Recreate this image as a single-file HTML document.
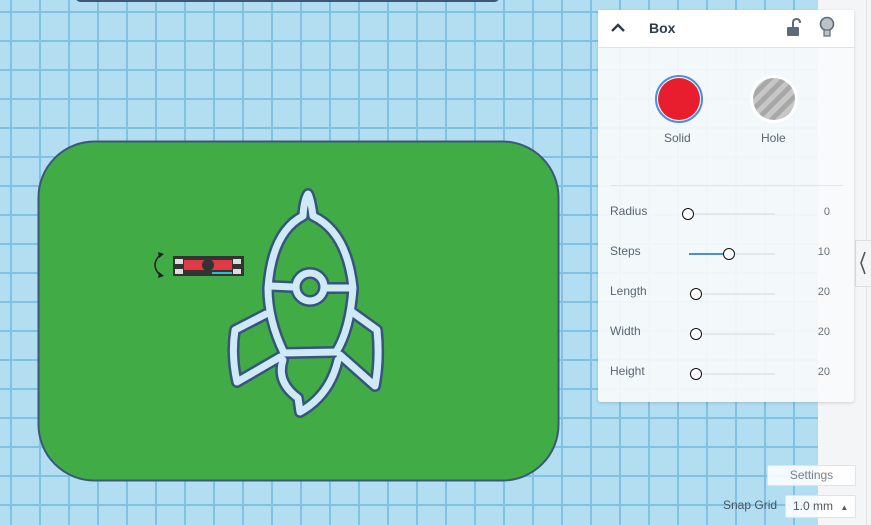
<!DOCTYPE html>
<html><head><meta charset="utf-8"><style>
*{margin:0;padding:0;box-sizing:border-box}
body{width:871px;height:525px;overflow:hidden;position:relative;font-family:"Liberation Sans",sans-serif;background:#f4f5f6}
#grid{position:absolute;left:0;top:0;width:818px;height:525px;background-color:#b3def2;
background-image:
linear-gradient(90deg,transparent 10px,#80c2e2 10px,#80c2e2 12px,transparent 12px),
linear-gradient(0deg,transparent 16px,#80c2e2 16px,#80c2e2 18px,transparent 18px);
background-size:29px 29px,29px 29px}
.strip{position:absolute;left:866px;top:0;width:1px;height:525px;background:#e2e4e6}
.panel{position:absolute;left:598px;top:10px;width:256px;height:392px;background:rgba(248,250,251,.92);box-shadow:0 1px 3px rgba(0,0,0,.15);border-radius:3px}
.hdr{height:38px;background:#fff;border-bottom:1px solid #dfe3e6;position:relative}
.lbl{position:absolute;font-size:12px;color:#5a6570}
.val{position:absolute;font-size:11px;color:#6a737b;right:24px}
.track{position:absolute;left:91px;width:86px;height:2px;background:#e6e7ea}
.knob{position:absolute;width:12px;height:12px;border:1.5px solid #111;border-radius:50%;background:#fff}
.btn{position:absolute;border:1px solid #e0e2e4;background:rgba(255,255,255,.85);font-size:12px;color:#7a8288;border-radius:2px}
</style></head><body>
<div id="grid"></div>
<div class="strip"></div>
<div style="position:absolute;left:855px;top:240px;width:16px;height:47px;background:#f4f5f6;border:1px solid #dcdfe2;border-right:none"></div>
<svg style="position:absolute;left:858px;top:250px" width="10" height="26"><path d="M7 2 L3 13 L7 24" stroke="#555" stroke-width="1.6" fill="none"/></svg>
<svg style="position:absolute;left:0;top:0" width="818" height="525">
<rect x="75" y="-10" width="425" height="12" rx="6" fill="#3c5878"/>
<rect x="38.5" y="141.5" width="520" height="339" rx="56" fill="#41ac45" stroke="#3c5878" stroke-width="2"/>
<g fill="none" stroke-linejoin="round" stroke-linecap="round">
<g stroke="#35557a" stroke-width="12">
<path d="M308 194 Q311 200 313 216 Q347 232 353 288 Q350 330 336 352 L284 353 Q268 320 268 288 Q272 232 303 216 Q304 200 308 194Z"/>
<path d="M270 286 L293 287 M327 288 L352 288"/>
<circle cx="310" cy="287" r="14"/>
<path d="M266 314 L235 330 Q231 355 237 382 L280 357"/>
<path d="M352 312 L377 330 Q380 360 375 386 L340 355"/>
<path d="M283 360 Q276 382 298 398 L300 412 Q330 395 338 360"/>
</g>
<g stroke="#cfe9f7" stroke-width="7">
<path d="M308 194 Q311 200 313 216 Q347 232 353 288 Q350 330 336 352 L284 353 Q268 320 268 288 Q272 232 303 216 Q304 200 308 194Z"/>
<path d="M270 286 L293 287 M327 288 L352 288"/>
<circle cx="310" cy="287" r="14"/>
<path d="M266 314 L235 330 Q231 355 237 382 L280 357"/>
<path d="M352 312 L377 330 Q380 360 375 386 L340 355"/>
<path d="M283 360 Q276 382 298 398 L300 412 Q330 395 338 360"/>
</g>
</g>
<path d="M160 255 Q150 265 160 275" stroke="#222" stroke-width="1.5" fill="none"/>
<path d="M158 252 L164 254 L159 258Z M158 278 L164 276 L159 272Z" fill="#222"/>
<rect x="173" y="256" width="71" height="20" fill="#333"/>
<rect x="184" y="260" width="48" height="10" fill="#e03a45"/>
<rect x="212" y="272" width="20" height="2" fill="#28c0d0"/>
<circle cx="208" cy="265" r="6" fill="#333"/>
<rect x="175" y="259" width="8" height="5" fill="#ddd"/><rect x="175" y="269" width="8" height="5" fill="#ddd"/>
<rect x="233" y="259" width="8" height="5" fill="#ddd"/><rect x="233" y="269" width="8" height="5" fill="#ddd"/>
</svg>
<div class="panel">
<div class="hdr">
<svg style="position:absolute;left:12px;top:12px" width="16" height="12"><path d="M2 9 L8 3 L14 9" stroke="#2e3e4e" stroke-width="2.4" fill="none"/></svg>
<div style="position:absolute;left:51px;top:10px;font-size:14px;color:#2f3d4b;font-weight:bold">Box</div>
<svg style="position:absolute;left:188px;top:8px" width="16" height="20"><path d="M7 9 V5 Q7 1 10.5 1 Q14 1 14 5" stroke="#5d6b78" stroke-width="2" fill="none"/><rect x="1" y="9" width="12" height="9" rx="1" fill="#5d6b78"/></svg>
<svg style="position:absolute;left:221px;top:6px" width="16" height="24"><circle cx="8" cy="8" r="6.5" fill="#bdc2c8" stroke="#5d6b78" stroke-width="1.6"/><rect x="5" y="14" width="6" height="6" fill="#bdc2c8" stroke="#5d6b78" stroke-width="1.2"/></svg>
</div>
<div style="position:absolute;left:57px;top:65px;width:48px;height:48px;border-radius:50%;border:2px solid #4a8edc;background:#fff"></div>
<div style="position:absolute;left:60px;top:68px;width:42px;height:42px;border-radius:50%;background:#e81e2e"></div>
<div style="position:absolute;left:152px;top:65px;width:48px;height:48px;border-radius:50%;background:#fff"></div>
<div style="position:absolute;left:155px;top:68px;width:42px;height:42px;border-radius:50%;background:repeating-linear-gradient(135deg,#a8a8a8 0 5px,#c7c7c7 5px 10px)"></div>
<div class="lbl" style="left:66px;top:121px">Solid</div>
<div class="lbl" style="left:163px;top:121px">Hole</div>
<div style="position:absolute;left:13px;top:175px;width:232px;height:1px;background:#e3e6e8"></div>
<div class="lbl" style="left:12px;top:194px">Radius</div><div class="track" style="top:203px"></div><div class="knob" style="left:84px;top:198px"></div><div class="val" style="top:196px">0</div>
<div class="lbl" style="left:12px;top:234px">Steps</div><div class="track" style="top:243px"></div><div style="position:absolute;left:91px;top:243px;width:35px;height:2px;background:#4a8edc"></div><div class="knob" style="left:125px;top:238px"></div><div class="val" style="top:236px">10</div>
<div class="lbl" style="left:12px;top:274px">Length</div><div class="track" style="top:283px"></div><div class="knob" style="left:92px;top:278px"></div><div class="val" style="top:276px">20</div>
<div class="lbl" style="left:12px;top:314px">Width</div><div class="track" style="top:323px"></div><div class="knob" style="left:92px;top:318px"></div><div class="val" style="top:316px">20</div>
<div class="lbl" style="left:12px;top:354px">Height</div><div class="track" style="top:363px"></div><div class="knob" style="left:92px;top:358px"></div><div class="val" style="top:356px">20</div>
</div>
<div class="btn" style="left:767px;top:465px;width:89px;height:21px;text-align:center;line-height:19px">Settings</div>
<div style="position:absolute;left:723px;top:498px;font-size:12px;color:#4a5560">Snap Grid</div>
<div class="btn" style="left:785px;top:495px;width:71px;height:23px;line-height:21px;padding-left:7px;color:#555">1.0 mm <span style="font-size:8px;margin-left:4px">▲</span></div>
</body></html>
